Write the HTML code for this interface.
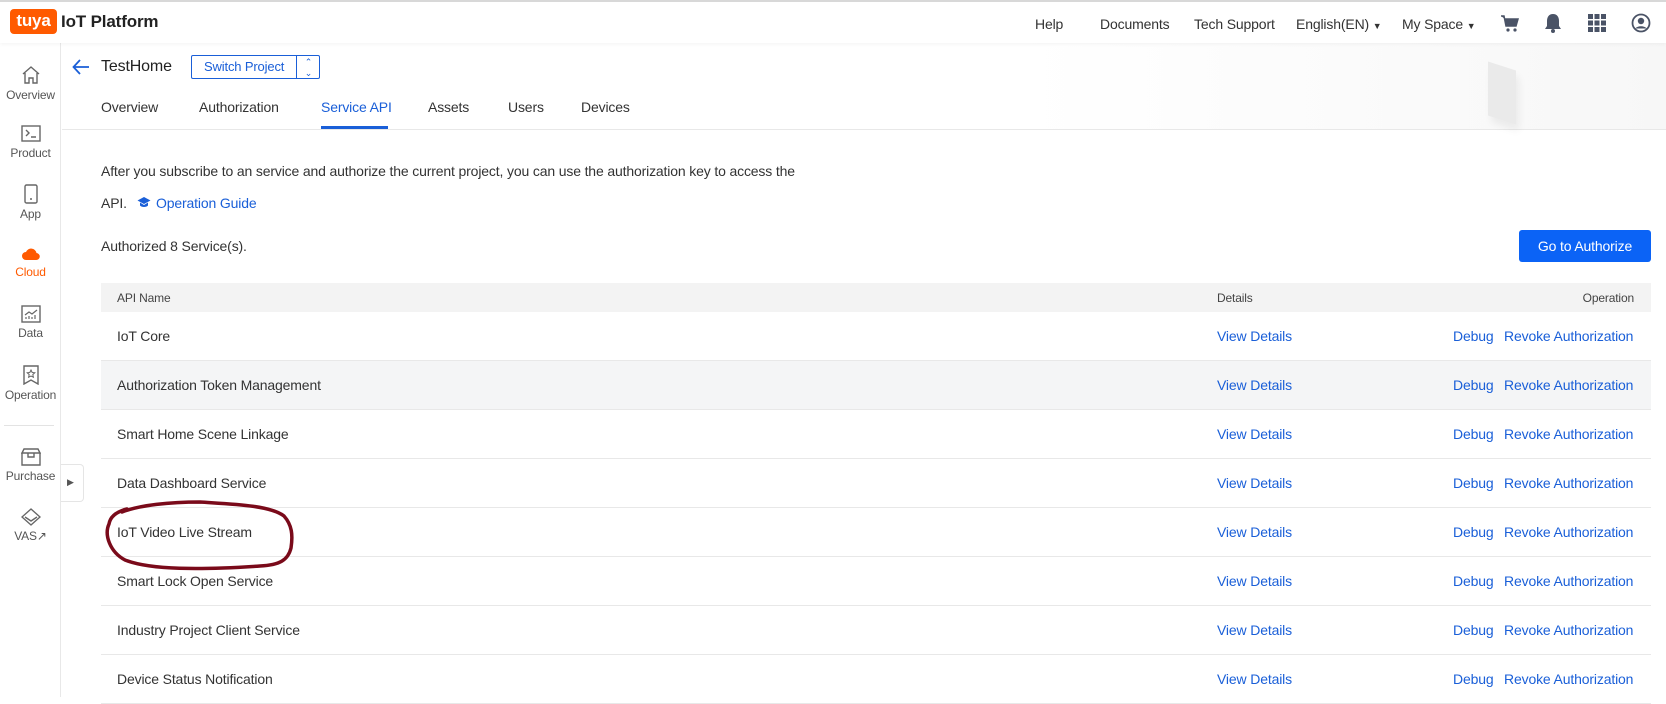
<!DOCTYPE html>
<html><head><meta charset="utf-8">
<style>
*{margin:0;padding:0;box-sizing:border-box}
body{width:1666px;height:697px;overflow:hidden;background:#fff;font-family:"Liberation Sans",sans-serif;color:#333;font-size:14px;position:relative;letter-spacing:-0.15px}
.abs{position:absolute;white-space:nowrap}
.hdr{position:absolute;left:0;top:0;width:1666px;height:43px;background:#fff;border-top:2px solid #d8d8d8;box-shadow:0 1px 4px rgba(0,0,0,.05);z-index:2}
.nav{font-size:14px;color:#333;top:14px}
.side{position:absolute;left:0;top:43px;width:61px;height:654px;border-right:1px solid #e8e8e8;background:#fff}
.si{position:absolute;left:0;width:61px;text-align:center;font-size:12px;color:#555}
.si svg{display:block;margin:0 auto 3px}
.tabs span{position:absolute;top:99px;font-size:14px;color:#333}
.blue{color:#1a5fd8}
.row{position:absolute;left:101px;width:1550px;height:49px;border-bottom:1px solid #e8e8e8}
.row span{position:absolute;top:16px}
.c1{left:16px}.c2{left:1116px;color:#1a5fd8}.c3{left:1352px;color:#1a5fd8}.c4{left:1403px;color:#1a5fd8}
</style></head><body>
<div class="hdr">
  <div class="abs" style="left:10px;top:7px;width:47px;height:25px;background:#ff5a00;border-radius:4px;color:#fff;font-weight:bold;font-size:17px;line-height:23px;text-align:center">tuya</div>
  <div class="abs" style="left:61px;top:10px;font-weight:bold;font-size:17px;color:#222">IoT Platform</div>
  <span class="abs nav" style="left:1035px">Help</span>
  <span class="abs nav" style="left:1100px">Documents</span>
  <span class="abs nav" style="left:1194px">Tech Support</span>
  <span class="abs nav" style="left:1296px">English(EN) <span style="font-size:9px">▼</span></span>
  <span class="abs nav" style="left:1402px">My Space <span style="font-size:9px">▼</span></span>
  <svg class="abs" style="left:1500px;top:12px" width="20" height="20" viewBox="0 0 20 20"><path d="M1 2h3l2 10h10l2-7H5" fill="#4a5366" stroke="#4a5366" stroke-width="1.5"/><circle cx="8" cy="16" r="1.6" fill="#4a5366"/><circle cx="15" cy="16" r="1.6" fill="#4a5366"/></svg>
  <svg class="abs" style="left:1544px;top:11px" width="18" height="20" viewBox="0 0 18 20"><path d="M9 1c-4 0-6 3-6 7v5l-2 3h16l-2-3V8c0-4-2-7-6-7z" fill="#4a5366"/><circle cx="9" cy="18" r="2" fill="#4a5366"/></svg>
  <svg class="abs" style="left:1588px;top:12px" width="18" height="18" viewBox="0 0 18 18" fill="#4a5366"><rect x="0" y="0" width="5" height="5"/><rect x="6.5" y="0" width="5" height="5"/><rect x="13" y="0" width="5" height="5"/><rect x="0" y="6.5" width="5" height="5"/><rect x="6.5" y="6.5" width="5" height="5"/><rect x="13" y="6.5" width="5" height="5"/><rect x="0" y="13" width="5" height="5"/><rect x="6.5" y="13" width="5" height="5"/><rect x="13" y="13" width="5" height="5"/></svg>
  <svg class="abs" style="left:1631px;top:11px" width="20" height="20" viewBox="0 0 20 20"><circle cx="10" cy="10" r="8.5" fill="none" stroke="#4a5366" stroke-width="1.8"/><circle cx="10" cy="8" r="3.2" fill="#4a5366"/><path d="M4.5 15.5c1.5-3 9.5-3 11 0" fill="#4a5366"/></svg>
</div>
<div class="side">
  <div class="si" style="top:22px"><svg width="20" height="20" viewBox="0 0 20 20"><path d="M2 9L10 2l8 7M4 8v10h4v-5h4v5h4V8" fill="none" stroke="#666" stroke-width="1.4"/></svg>Overview</div>
  <div class="si" style="top:82px"><svg width="20" height="18" viewBox="0 0 20 18"><rect x="1" y="1" width="18" height="15" fill="none" stroke="#666" stroke-width="1.4"/><path d="M5 5l3 3-3 3M10 12h5" fill="none" stroke="#666" stroke-width="1.4"/></svg>Product</div>
  <div class="si" style="top:141px"><svg width="16" height="20" viewBox="0 0 16 20"><rect x="2" y="1" width="12" height="18" rx="1.5" fill="none" stroke="#666" stroke-width="1.4"/><circle cx="8" cy="15" r="1" fill="#666"/></svg>App</div>
  <div class="si" style="top:203px;color:#ff5a00"><svg width="20" height="16" viewBox="0 0 20 16"><path d="M5 14a4 4 0 010-8 5.5 5.5 0 0110.5 1A3.5 3.5 0 0115 14z" fill="#ff5a00"/></svg>Cloud</div>
  <div class="si" style="top:262px"><svg width="20" height="18" viewBox="0 0 20 18"><rect x="1" y="1" width="18" height="16" fill="none" stroke="#666" stroke-width="1.4"/><path d="M4 10l4-3 3 2 5-4M5 14v-2M8 14v-3M11 14v-2M14 14v-4" fill="none" stroke="#666" stroke-width="1.2"/></svg>Data</div>
  <div class="si" style="top:322px"><svg width="18" height="20" viewBox="0 0 18 20"><path d="M2 1h14v18l-7-4-7 4z" fill="none" stroke="#666" stroke-width="1.4"/><path d="M9 5l1.2 2.5 2.6.3-2 1.8.6 2.6L9 11l-2.4 1.2.6-2.6-2-1.8 2.6-.3z" fill="none" stroke="#666" stroke-width="1"/></svg>Operation</div>
  <div style="position:absolute;left:4px;top:382px;width:50px;border-top:1px solid #e3e3e3"></div>
  <div class="si" style="top:405px"><svg width="20" height="18" viewBox="0 0 20 18"><path d="M1 5h18v12H1zM3 1h14l2 4H1zM7 5v4h6V5" fill="none" stroke="#666" stroke-width="1.4"/></svg>Purchase</div>
  <div class="si" style="top:465px"><svg width="20" height="18" viewBox="0 0 20 18"><path d="M10 1l9 8-9 8-9-8zM4 9l6 4 6-4" fill="none" stroke="#666" stroke-width="1.4"/></svg>VAS↗</div>
</div>
<div class="abs" style="left:61px;top:464px;width:23px;height:38px;border:1px solid #e5e5e5;border-left:none;border-radius:0 4px 4px 0;background:#fff"><span style="position:absolute;left:6px;top:12px;font-size:9px;color:#555">▶</span></div>
<div class="abs" style="left:62px;top:43px;width:1604px;height:87px;background:linear-gradient(90deg,#fff 60%,#f7f7f7);border-bottom:1px solid #e8e8e8"></div>
<div class="abs" style="left:1488px;top:66px;width:28px;height:54px;background:#eaeaea;transform:skewY(18deg);box-shadow:3px 6px 8px rgba(0,0,0,.06)"></div>
<svg class="abs" style="left:72px;top:59px" width="18" height="16" viewBox="0 0 18 16"><path d="M17 8H2M8 1L1.5 8 8 15" fill="none" stroke="#1a5fd8" stroke-width="1.8"/></svg>
<div class="abs" style="left:101px;top:58px;font-size:16px;color:#222">TestHome</div>
<div class="abs" style="left:191px;top:55px;width:129px;height:24px;border:1px solid #1a5fd8;border-radius:2px;color:#1a5fd8;font-size:13px;line-height:22px;padding-left:12px">Switch Project<span style="position:absolute;left:104px;top:0;height:22px;border-left:1px solid #1a5fd8;width:24px;text-align:center;font-size:9px;line-height:11px;padding-top:1px">⌃<br>⌄</span></div>
<div class="tabs">
  <span style="left:101px">Overview</span><span style="left:199px">Authorization</span>
  <span style="left:321px;color:#1a5fd8">Service API</span><span style="left:428px">Assets</span>
  <span style="left:508px">Users</span><span style="left:581px">Devices</span>
</div>
<div class="abs" style="left:321px;top:126px;width:67px;height:3px;background:#1a5fd8"></div>
<div class="abs" style="left:101px;top:163px">After you subscribe to an service and authorize the current project, you can use the authorization key to access the</div>
<div class="abs" style="left:101px;top:195px">API.</div>
<div class="abs blue" style="left:156px;top:195px">Operation Guide</div>
<svg class="abs" style="left:137px;top:196px" width="14" height="13" viewBox="0 0 14 13"><path d="M7 1l6.5 3.5L7 8 .5 4.5z" fill="#1a5fd8"/><path d="M3 6.5v3c1.5 2 6.5 2 8 0v-3L7 9z" fill="#1a5fd8"/></svg>
<div class="abs" style="left:101px;top:238px">Authorized 8 Service(s).</div>
<div class="abs" style="left:1519px;top:230px;width:132px;height:32px;background:#0b63f6;border-radius:3px;color:#fff;font-size:14px;line-height:32px;text-align:center">Go to Authorize</div>
<div class="abs" style="left:101px;top:283px;width:1550px;height:29px;background:#f3f3f3;font-size:12px;color:#444">
  <span class="abs" style="left:16px;top:8px">API Name</span><span class="abs" style="left:1116px;top:8px">Details</span><span class="abs" style="right:17px;top:8px">Operation</span>
</div>
<div class="row" style="top:312px"><span class="c1">IoT Core</span><span class="c2">View Details</span><span class="c3">Debug</span><span class="c4">Revoke Authorization</span></div>
<div class="row" style="top:361px;background:#f4f5f6"><span class="c1">Authorization Token Management</span><span class="c2">View Details</span><span class="c3">Debug</span><span class="c4">Revoke Authorization</span></div>
<div class="row" style="top:410px"><span class="c1">Smart Home Scene Linkage</span><span class="c2">View Details</span><span class="c3">Debug</span><span class="c4">Revoke Authorization</span></div>
<div class="row" style="top:459px"><span class="c1">Data Dashboard Service</span><span class="c2">View Details</span><span class="c3">Debug</span><span class="c4">Revoke Authorization</span></div>
<div class="row" style="top:508px"><span class="c1">IoT Video Live Stream</span><span class="c2">View Details</span><span class="c3">Debug</span><span class="c4">Revoke Authorization</span></div>
<div class="row" style="top:557px"><span class="c1">Smart Lock Open Service</span><span class="c2">View Details</span><span class="c3">Debug</span><span class="c4">Revoke Authorization</span></div>
<div class="row" style="top:606px"><span class="c1">Industry Project Client Service</span><span class="c2">View Details</span><span class="c3">Debug</span><span class="c4">Revoke Authorization</span></div>
<div class="row" style="top:655px"><span class="c1">Device Status Notification</span><span class="c2">View Details</span><span class="c3">Debug</span><span class="c4">Revoke Authorization</span></div>
<svg class="abs" style="left:0;top:0" width="1666" height="697" viewBox="0 0 1666 697"><path d="M127 509C115 512 110 518 109 524C104 535 110 552 125 560C150 570 200 570 260 566C280 565 288 560 291 548C293 535 292 525 284 516C270 505 230 504 200 502C170 502 140 505 122 512" fill="none" stroke="#7a0a1a" stroke-width="3.5" stroke-linecap="round"/></svg>
</body></html>
